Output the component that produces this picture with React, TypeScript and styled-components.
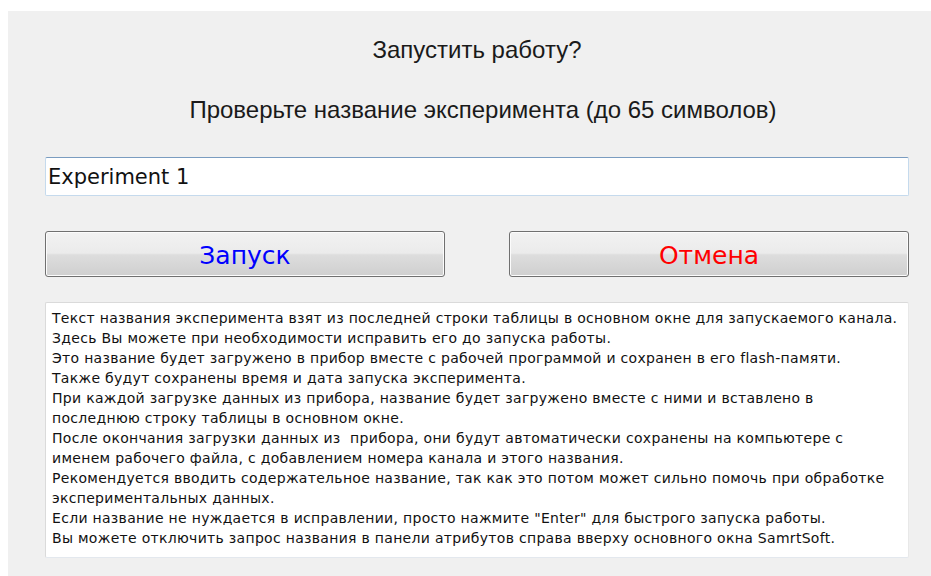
import styled, { createGlobalStyle } from "styled-components";

const GlobalStyle = createGlobalStyle`
  html, body {
    margin: 0;
    padding: 0;
    background: #ffffff;
  }
  * {
    box-sizing: border-box;
  }
`;

const notes = [
  "Текст названия эксперимента взят из последней строки таблицы в основном окне для запускаемого канала.",
  "Здесь Вы можете при необходимости исправить его до запуска работы.",
  "Это название будет загружено в прибор вместе с рабочей программой и сохранен в его flash-памяти.",
  "Также будут сохранены время и дата запуска эксперимента.",
  "При каждой загрузке данных из прибора, название будет загружено вместе с ними и вставлено в",
  "последнюю строку таблицы в основном окне.",
  "После окончания загрузки данных из  прибора, они будут автоматически сохранены на компьютере с",
  "именем рабочего файла, с добавлением номера канала и этого названия.",
  "Рекомендуется вводить содержательное название, так как это потом может сильно помочь при обработке",
  "экспериментальных данных.",
  "Если название не нуждается в исправлении, просто нажмите \"Enter\" для быстрого запуска работы.",
  "Вы можете отключить запрос названия в панели атрибутов справа вверху основного окна SamrtSoft.",
];

function App() {
  return (
    <>
      <GlobalStyle />
      <Dialog>
        <Title>Запустить работу?</Title>
        <Subtitle>Проверьте название эксперимента (до 65 символов)</Subtitle>
        <NameInput type="text" defaultValue="Experiment 1" maxLength={65} />
        <ButtonRow>
          <DialogButton tone="#0000ff">Запуск</DialogButton>
          <DialogButton tone="#ff0000">Отмена</DialogButton>
        </ButtonRow>
        <HelpBox>
          {notes.map((line, i) => (
            <HelpLine key={i}>{line}</HelpLine>
          ))}
        </HelpBox>
      </Dialog>
    </>
  );
}

export default App;

const Dialog = styled.div`
  margin: 11px 0 0 8px;
  min-height: calc(100vh - 11px);
  background: #f0f0f0;
  padding: 26px 22px 18px 37px;
  display: flex;
  flex-direction: column;
  align-items: stretch;
`;

const Title = styled.div`
  font-family: "Liberation Sans", Arial, sans-serif;
  font-size: 24px;
  line-height: 26px;
  color: #1a1a1a;
  text-align: center;
`;

const Subtitle = styled(Title)`
  margin-top: 34px;
  padding-left: 12px;
`;

const NameInput = styled.input`
  margin-top: 34px;
  height: 39px;
  width: 100%;
  padding: 0 2px;
  font-family: "DejaVu Sans", Verdana, sans-serif;
  font-size: 21px;
  color: #111;
  background: #fff;
  border: 1px solid #c5daed;
  border-top-color: #7a9cc0;
  border-radius: 2px;
  outline: none;
`;

const ButtonRow = styled.div`
  margin-top: 35px;
  display: grid;
  grid-template-columns: 1fr 1fr;
  gap: 64px;
`;

const DialogButton = styled.button<{ tone: string }>`
  height: 46px;
  padding: 3px 0 0;
  font-family: "DejaVu Sans", Verdana, sans-serif;
  font-size: 25px;
  color: ${(p) => p.tone};
  border: 1px solid #707070;
  border-radius: 3px;
  background: linear-gradient(
    to bottom,
    #f2f2f2 0%,
    #ebebeb 48%,
    #dddddd 52%,
    #cfcfcf 100%
  );
  box-shadow: inset 0 0 0 1px #fcfcfc;
  cursor: pointer;
`;

const HelpBox = styled.div`
  margin-top: 25px;
  height: 256px;
  background: #fff;
  border: 1px solid #dadada;
  border-right-color: #e8e8e8;
  border-bottom-color: #e3e8ee;
  border-radius: 2px;
  padding: 5px 6px 9px 6px;
`;

const HelpLine = styled.div`
  font-family: "DejaVu Sans", Verdana, sans-serif;
  font-size: 14px;
  letter-spacing: 0.3px;
  line-height: 20px;
  color: #111;
  white-space: pre;
`;
